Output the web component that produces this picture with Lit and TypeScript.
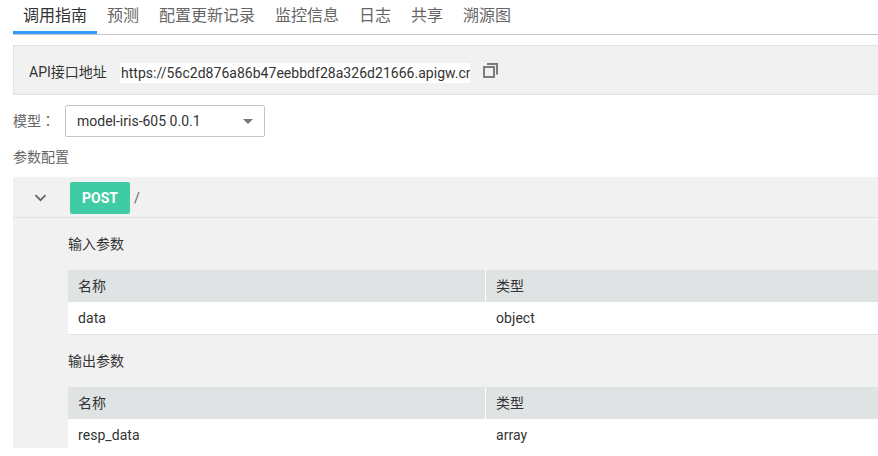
import { LitElement, html, css } from "lit";
import { customElement, property } from "lit/decorators.js";

const TABS = ["调用指南", "预测", "配置更新记录", "监控信息", "日志", "共享", "溯源图"];

@customElement("param-table")
class ParamTable extends LitElement {
  @property() heading = "";
  @property() name = "";
  @property() type = "";

  static styles = css`
    :host { display: block; }
    .title { height: 52px; line-height: 52px; }
    .row { display: grid; grid-template-columns: 418px 1fr; height: 32px; line-height: 32px; background: #fff; border-bottom: 1px solid #dfe1e2; }
    .head { background: #dfe3e4; border-bottom: 0; }
    .cell { padding-left: 10px; letter-spacing: 0.06px; }
    .head .cell { letter-spacing: 0; }
    .head .cell:first-child { border-right: 1px solid #fff; }
  `;

  render() {
    return html`
      <div class="title">${this.heading}</div>
      <div class="row head"><div class="cell">名称</div><div class="cell">类型</div></div>
      <div class="row"><div class="cell">${this.name}</div><div class="cell">${this.type}</div></div>
    `;
  }
}

@customElement("app-root")
class AppRoot extends LitElement {
  static styles = css`
    :host { display: block; box-sizing: border-box; height: 456px; padding-left: 13px; overflow: hidden; background: #fff; color: #333; font: 14px Roboto, "Noto Sans CJK SC", sans-serif; }
    * { box-sizing: border-box; }
    .tabs { display: flex; height: 35px; border-bottom: 1px solid #c4c4c4; font-size: 16px; line-height: 32px; color: #666; }
    .tab { padding: 0 10px; height: 34px; white-space: nowrap; }
    .active { color: #333; border-bottom: 3px solid #3399ff; }
    .api { display: flex; align-items: center; height: 50px; margin-top: 10px; padding-left: 15px; background: #f1f1f1; border: 1px solid #e2e2e2; border-right: 0; }
    .label { width: 91px; margin-top: 4px; white-space: nowrap; line-height: 20px; }
    .url { width: 350px; height: 20px; margin-top: 5px; line-height: 20px; padding-left: 1px; background: #fff; overflow: hidden; white-space: nowrap; letter-spacing: 0.03px; }
    .copy { width: 17px; height: 17px; margin-left: 12px; margin-top: 1px; }
    .model { display: flex; align-items: center; height: 32px; margin-top: 10px; color: #666; }
    .model-label { width: 52px; margin-top: -3px; white-space: nowrap; }
    .colon { font-family: "Noto Sans CJK TC", sans-serif; line-height: 1; }
    .select { display: flex; align-items: center; justify-content: space-between; width: 200px; height: 32px; padding: 0 11px; border: 1px solid #c4c4c4; border-radius: 2px; color: #333; }
    .caption { height: 40px; line-height: 40px; color: #666; }
    .panel { height: 271px; background: #f1f1f1; overflow: hidden; }
    .bar { display: flex; align-items: center; height: 41px; border-bottom: 1px solid #e0e0e0; padding: 2px 0 0 21px; }
    .chevron { width: 13px; height: 8px; margin-right: 23px; }
    .post { width: 60px; height: 32px; border-radius: 2px; background: #3fcca4; color: #fff; font-weight: 700; text-align: center; line-height: 32px; }
    .path { margin-left: 4px; color: #666; }
    .body { padding-left: 55px; }
  `;

  render() {
    return html`
      <nav class="tabs">${TABS.map((t, i) => html`<div class="tab ${i === 0 ? "active" : ""}">${t}</div>`)}</nav>
      <div class="api">
        <span class="label">API接口地址</span>
        <div class="url">https://56c2d876a86b47eebbdf28a326d21666.apigw.cn</div>
        <svg class="copy" viewBox="0 0 17 17" fill="none" stroke="#7c7c7c">
          <rect x="2" y="5" width="10" height="10" stroke-width="2" />
          <path d="M5 2H15V12.5" stroke-width="2" />
        </svg>
      </div>
      <div class="model">
        <span class="model-label">模型<span class="colon">：</span></span>
        <div class="select"><span>model-iris-605 0.0.1</span>
          <svg width="10" height="5" viewBox="0 0 10 5"><path d="M0 0H10L5 5Z" fill="#777" /></svg>
        </div>
      </div>
      <div class="caption">参数配置</div>
      <section class="panel">
        <div class="bar">
          <svg class="chevron" viewBox="0 0 13 8" fill="none" stroke="#666" stroke-width="1.8"><path d="M1.5 1.2L6.5 6.2L11.5 1.2" /></svg>
          <span class="post">POST</span><span class="path">/</span>
        </div>
        <div class="body">
          <param-table heading="输入参数" name="data" type="object"></param-table>
          <param-table heading="输出参数" name="resp_data" type="array"></param-table>
        </div>
      </section>
    `;
  }
}
